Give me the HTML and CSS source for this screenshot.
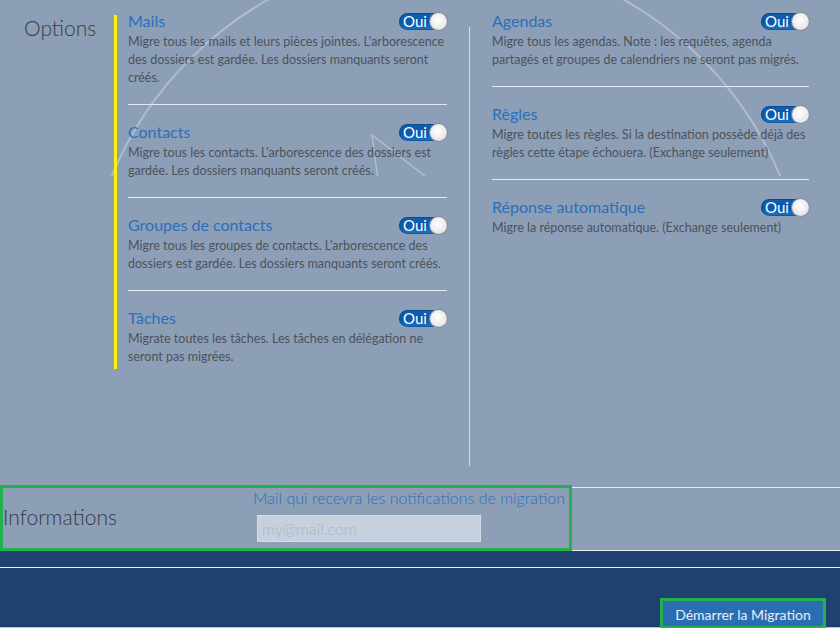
FILE: index.html
```html
<!DOCTYPE html>
<html lang="fr">
<head>
<meta charset="utf-8">
<title>Migration</title>
<link rel="stylesheet" href="styles.css">
</head>
<body>
<div class="page">
  <svg class="deco" width="840" height="176" viewBox="0 0 840 176" aria-hidden="true">
    <circle cx="446" cy="315" r="362" fill="none" stroke="rgba(255,255,255,0.3)" stroke-width="2"/>
    <polyline points="378,180 372,135 430,180" fill="none" stroke="rgba(255,255,255,0.3)" stroke-width="1.5"/>
  </svg>

  <section class="options">
    <h2 class="section-label">Options</h2>

    <div class="col col-left">
      <div class="item">
        <div class="item-head"><span class="item-title">Mails</span><span class="toggle"><span class="toggle-label">Oui</span><span class="knob"></span></span></div>
        <p class="item-desc">Migre tous les mails et leurs pièces jointes. L'arborescence des dossiers est gardée. Les dossiers manquants seront créés.</p>
      </div>
      <hr class="sep">
      <div class="item">
        <div class="item-head"><span class="item-title">Contacts</span><span class="toggle"><span class="toggle-label">Oui</span><span class="knob"></span></span></div>
        <p class="item-desc">Migre tous les contacts. L'arborescence des dossiers est gardée. Les dossiers manquants seront créés.</p>
      </div>
      <hr class="sep">
      <div class="item">
        <div class="item-head"><span class="item-title">Groupes de contacts</span><span class="toggle"><span class="toggle-label">Oui</span><span class="knob"></span></span></div>
        <p class="item-desc">Migre tous les groupes de contacts. L'arborescence des dossiers est gardée. Les dossiers manquants seront créés.</p>
      </div>
      <hr class="sep">
      <div class="item">
        <div class="item-head"><span class="item-title">Tâches</span><span class="toggle"><span class="toggle-label">Oui</span><span class="knob"></span></span></div>
        <p class="item-desc">Migrate toutes les tâches. Les tâches en délégation ne seront pas migrées.</p>
      </div>
    </div>

    <div class="divider"></div>

    <div class="col col-right">
      <div class="item">
        <div class="item-head"><span class="item-title">Agendas</span><span class="toggle"><span class="toggle-label">Oui</span><span class="knob"></span></span></div>
        <p class="item-desc">Migre tous les agendas. Note : les requêtes, agenda partagés et groupes de calendriers ne seront pas migrés.</p>
      </div>
      <hr class="sep">
      <div class="item">
        <div class="item-head"><span class="item-title">Règles</span><span class="toggle"><span class="toggle-label">Oui</span><span class="knob"></span></span></div>
        <p class="item-desc">Migre toutes les règles. Si la destination possède déjà des règles cette étape échouera. (Exchange seulement)</p>
      </div>
      <hr class="sep">
      <div class="item">
        <div class="item-head"><span class="item-title">Réponse automatique</span><span class="toggle"><span class="toggle-label">Oui</span><span class="knob"></span></span></div>
        <p class="item-desc">Migre la réponse automatique. (Exchange seulement)</p>
      </div>
    </div>
  </section>

  <section class="info">
    <div class="info-box">
      <h2 class="info-label">Informations</h2>
      <div class="info-field">
        <label class="field-label" for="mail">Mail qui recevra les notifications de migration</label>
        <input class="field-input" id="mail" type="text" placeholder="my@mail.com">
      </div>
    </div>
    <div class="info-rest"></div>
  </section>

  <footer class="footer">
    <div class="footer-top"></div>
    <div class="footer-main">
      <button class="start-btn" type="button">Démarrer la Migration</button>
    </div>
  </footer>
</div>
</body>
</html>
```
FILE: styles.css
```css
* { box-sizing: border-box; }

html, body {
  margin: 0;
  padding: 0;
}

body {
  background: #8c9fb7;
  font-family: Lato, "Open Sans", sans-serif;
  color: #4b5059;
}

.page {
  position: relative;
  width: 840px;
  height: 628px;
  overflow: hidden;
  background: #8c9fb7;
}

.deco {
  position: absolute;
  left: 0;
  top: 0;
  pointer-events: none;
}

.options {
  position: relative;
  display: flex;
  align-items: flex-start;
  height: 485px;
}

.section-label {
  width: 114px;
  margin: 0;
  padding: 14px 0 0 24px;
  font-weight: 300;
  font-size: 21px;
  line-height: 28px;
  color: #383d45;
}

.col-left {
  width: 333px;
  margin-top: 15px;
  padding: 0 0 3px 11px;
  border-left: 3px solid #fff200;
}

.col-left .item:first-child {
  margin-top: -3px;
}

.divider {
  width: 1px;
  height: 439px;
  margin: 27px 0 0 22px;
  background: #d3dbe5;
}

.col-right {
  width: 339px;
  margin-top: 12px;
  padding-left: 22px;
}

.item-head {
  display: flex;
  justify-content: space-between;
  align-items: center;
  height: 18px;
}

.item-title {
  font-size: 16px;
  line-height: 18px;
  color: #2a6fb9;
}

.toggle {
  display: flex;
  align-items: center;
  width: 48px;
  height: 17px;
  border-radius: 9px;
  background: linear-gradient(#0f5fb0, #0a58aa 55%, #1a74c9);
  box-shadow: inset 0 0 0 1px rgba(10,40,80,0.35);
  position: relative;
}

.toggle-label {
  padding-left: 4px;
  font-size: 15px;
  line-height: 16px;
  color: #ffffff;
}

.knob {
  position: absolute;
  right: 0;
  top: 0;
  width: 17px;
  height: 17px;
  border-radius: 50%;
  background: radial-gradient(circle at 45% 40%, #ffffff, #e4e4e4 75%);
  box-shadow: 0 0 0 1px #8e8e8e;
}

.item-desc {
  margin: 3px 0 0 0;
  font-size: 12.5px;
  line-height: 18px;
  color: #4d525b;
}

.sep {
  margin: 17px 0 18px 0;
  border: 0;
  height: 1px;
  background: #e2e8ef;
}

.info {
  display: flex;
  height: 66px;
}

.info-box {
  display: flex;
  align-items: flex-start;
  width: 572px;
  height: 66px;
  border: 3px solid #22b14c;
}

.info-label {
  width: 250px;
  margin: 0;
  padding-top: 16px;
  font-weight: 300;
  font-size: 21px;
  line-height: 26px;
  color: #353a42;
}

.info-field {
  display: flex;
  flex-direction: column;
  align-items: flex-start;
}

.field-label {
  margin-top: 1px;
  font-weight: 300;
  font-size: 16px;
  line-height: 18px;
  color: #2a6fb9;
}

.field-input {
  width: 224px;
  height: 27px;
  margin: 8px 0 0 4px;
  padding: 0 4px;
  border: 1px solid #d4dce5;
  background: #c7d1dd;
  font-family: Lato, sans-serif;
  font-weight: 300;
  font-size: 16px;
  color: #333;
}

.field-input::placeholder {
  color: #a9b3c0;
}

.info-rest {
  flex: 1;
  margin-top: 2px;
  height: 64px;
  border-top: 1px solid #e7ecf2;
  border-bottom: 1px solid #e7ecf2;
}

.footer {
  background: #1e4170;
  height: 77px;
  border-bottom: 1px solid #b5c2d2;
}

.footer-top {
  height: 17px;
  border-bottom: 1px solid #eef2f7;
}

.footer-main {
  display: flex;
  justify-content: flex-end;
  align-items: flex-end;
  height: 59px;
  padding-right: 14px;
}

.start-btn {
  width: 166px;
  height: 31px;
  margin-bottom: -2px;
  border: 3px solid #22b14c;
  background: #2b6db1;
  font-family: Lato, sans-serif;
  font-size: 14px;
  color: #e8eef6;
  padding: 1px 0 0 0;
}
```
